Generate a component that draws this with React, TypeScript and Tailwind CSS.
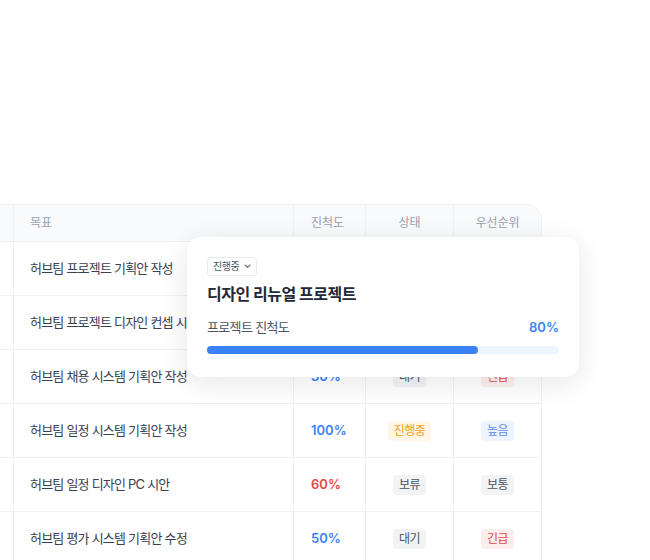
import React from "react";

type Row = {
  title: string;
  pct: string;
  pctColor: string;
  status: string;
  statusCls: string;
  prio: string;
  prioCls: string;
};

const gray = "bg-[#f2f3f5] text-[#4b5563]";
const orange = "bg-[#fff6e8] text-[#f59e0b]";
const blue = "bg-[#eef4ff] text-[#5b8def]";
const red = "bg-[#fdeeee] text-[#e5484d]";

const rows: Row[] = [
  { title: "허브팀 프로젝트 기획안 작성", pct: "80%", pctColor: "text-[#3b82f6]", status: "진행중", statusCls: orange, prio: "높음", prioCls: blue },
  { title: "허브팀 프로젝트 디자인 컨셉 시안", pct: "40%", pctColor: "text-[#3b82f6]", status: "진행중", statusCls: orange, prio: "보통", prioCls: gray },
  { title: "허브팀 채용 시스템 기획안 작성", pct: "30%", pctColor: "text-[#3b82f6]", status: "대기", statusCls: gray, prio: "긴급", prioCls: red },
  { title: "허브팀 일정 시스템 기획안 작성", pct: "100%", pctColor: "text-[#3b82f6]", status: "진행중", statusCls: orange, prio: "높음", prioCls: blue },
  { title: "허브팀 일정 디자인 PC 시안", pct: "60%", pctColor: "text-[#ef4444]", status: "보류", statusCls: gray, prio: "보통", prioCls: gray },
  { title: "허브팀 평가 시스템 기획안 수정", pct: "50%", pctColor: "text-[#3b82f6]", status: "대기", statusCls: gray, prio: "긴급", prioCls: red },
];

const cols = "grid grid-cols-[13px_280px_72px_88px_88px]";

function Badge({ text, cls }: { text: string; cls: string }) {
  return (
    <span className={`inline-flex h-[20px] items-center rounded-[4px] px-[6px] text-[12px] tracking-[-0.04em] ${cls}`}>
      {text}
    </span>
  );
}

export default function App() {
  return (
    <div className="relative h-[560px] w-[650px] overflow-hidden bg-white font-[Inter,'Noto_Sans_CJK_KR',sans-serif] [font-feature-settings:'palt']">
      <div className="pt-[204px]">
        <div className="w-[542px] rounded-tr-[16px] border-t border-r border-[#eff0f2]">
          <div className={`${cols} h-[37px] rounded-tr-[16px] border-b border-[#eff0f2] bg-[#f9fafb] text-[12px] text-[#9aa1ab]`}>
            <div />
            <div className="flex items-center border-l border-[#eff0f2] pl-[16px]">목표</div>
            <div className="flex items-center border-l border-[#eff0f2] pl-[17px]">진척도</div>
            <div className="flex items-center justify-center border-l border-[#eff0f2]">상태</div>
            <div className="flex items-center justify-center border-l border-[#eff0f2]">우선순위</div>
          </div>
          {rows.map((r) => (
            <div key={r.title} className={`${cols} h-[54px] border-b border-[#eff0f2]`}>
              <div />
              <div className="flex items-center overflow-hidden whitespace-nowrap border-l border-[#eff0f2] pl-[16px] text-[13px] tracking-[-0.06em] text-[#374151]">
                {r.title}
              </div>
              <div className={`flex items-center border-l border-[#eff0f2] pl-[17px] text-[13px] font-semibold ${r.pctColor}`}>
                {r.pct}
              </div>
              <div className="flex items-center justify-center border-l border-[#eff0f2]">
                <Badge text={r.status} cls={r.statusCls} />
              </div>
              <div className="flex items-center justify-center border-l border-[#eff0f2]">
                <Badge text={r.prio} cls={r.prioCls} />
              </div>
            </div>
          ))}
        </div>
      </div>

      <div className="absolute left-[187px] top-[237px] flex h-[140px] w-[392px] flex-col rounded-[14px] bg-white px-[20px] pt-[20px] shadow-[0_6px_28px_rgba(17,24,39,0.10)]">
        <div className="flex">
          <div className="inline-flex h-[19px] items-center gap-[5px] rounded-[4px] border border-[#e8eaed] pl-[5px] pr-[5px] text-[10px] tracking-[-0.05em] text-[#4b5563]">
            <span>진행중</span>
            <svg width="7" height="5" viewBox="0 0 7 5" fill="none">
              <path d="M1 1l2.5 2.5L6 1" stroke="#6b7280" strokeWidth="1.1" strokeLinecap="round" strokeLinejoin="round" />
            </svg>
          </div>
        </div>
        <div className="mt-[6px] h-[24px] text-[16px] font-bold leading-[24px] tracking-[-0.03em] text-[#1f2937]">
          디자인 리뉴얼 프로젝트
        </div>
        <div className="mt-[12px] flex h-[20px] items-center justify-between">
          <span className="text-[13px] tracking-[-0.05em] text-[#4b5563]">프로젝트 진척도</span>
          <span className="text-[13px] font-semibold text-[#3b82f6]">80%</span>
        </div>
        <div className="mt-[8px] h-[8px] w-full rounded-full bg-[#eff5fe]">
          <div className="h-[8px] w-[77%] rounded-full bg-[#3b82f6]" />
        </div>
      </div>
    </div>
  );
}
